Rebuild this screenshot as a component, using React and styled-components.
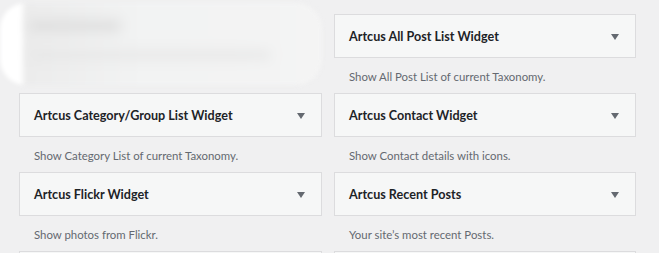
import styled, { createGlobalStyle } from 'styled-components';

const Global = createGlobalStyle`
  html, body {
    margin: 0;
    background: #f0f0f1;
    font-family: Lato, "Open Sans", sans-serif;
  }
`;

const Page = styled.div`
  width: 659px;
  height: 253px;
  overflow: hidden;
  padding: 14px 0 0 19px;
  box-sizing: border-box;
`;

const Grid = styled.div`
  display: grid;
  grid-template-columns: 303px 302px;
  column-gap: 12px;
  grid-auto-rows: 79px;
`;

const Item = styled.div`
  display: flex;
  flex-direction: column;
`;

const Head = styled.div`
  height: 44px;
  box-sizing: border-box;
  display: flex;
  align-items: center;
  justify-content: space-between;
  padding: 0 16px 0 14px;
  background: #f6f7f7;
  border: 1px solid #dcdcde;
`;

const Title = styled.h3`
  margin: 0;
  font-size: 12.6px;
  font-weight: 700;
  color: #1d2327;
`;

const Arrow = styled.span`
  width: 0;
  height: 0;
  border-left: 4px solid transparent;
  border-right: 4px solid transparent;
  border-top: 6px solid #646970;
  margin-top: 1px;
`;

const Desc = styled.p`
  margin: 0;
  padding: 11px 0 0 15px;
  font-size: 11.4px;
  color: #646970;
  line-height: 15px;
`;

const Smudge = styled.div`
  width: 322px;
  height: 82px;
  margin: -11px 0 0 -19px;
  border-radius: 26px;
  background: linear-gradient(to right, #ffffff 0 20px, #ececec 26px, #f2f3f3 45%, #f4f4f4 100%);
  filter: blur(2px);
  overflow: hidden;
  display: flex;
  flex-direction: column;
  padding: 18px 0 0 30px;
  box-sizing: border-box;
  gap: 20px;
`;

const Fog = styled.span`
  display: block;
  height: ${p => p.$h}px;
  width: ${p => p.$w}px;
  background: ${p => p.$c};
  filter: blur(6px);
`;

const widgets = [
  null,
  { title: 'Artcus All Post List Widget', desc: 'Show All Post List of current Taxonomy.' },
  { title: 'Artcus Category/Group List Widget', desc: 'Show Category List of current Taxonomy.' },
  { title: 'Artcus Contact Widget', desc: 'Show Contact details with icons.' },
  { title: 'Artcus Flickr Widget', desc: 'Show photos from Flickr.' },
  { title: 'Artcus Recent Posts', desc: 'Your site’s most recent Posts.' },
  { title: '', desc: '' },
  { title: '', desc: '' },
];

function Widget({ title, desc }) {
  return (
    <Item>
      <Head>
        <Title>{title}</Title>
        {title && <Arrow />}
      </Head>
      <Desc>{desc}</Desc>
    </Item>
  );
}

export default function App() {
  return (
    <Page>
      <Global />
      <Grid>
        {widgets.map((w, i) =>
          w ? (
            <Widget key={i} title={w.title} desc={w.desc} />
          ) : (
            <Item key={i}>
              <Smudge>
                <Fog $w={90} $h={10} $c="#dcdcdc" />
                <Fog $w={240} $h={8} $c="#e6e6e6" />
              </Smudge>
            </Item>
          )
        )}
      </Grid>
    </Page>
  );
}
